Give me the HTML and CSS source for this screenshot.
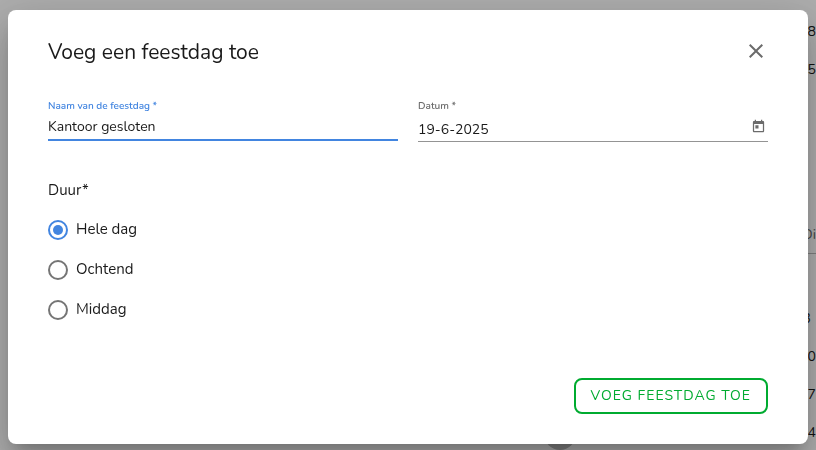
FILE: index.html
```
<!DOCTYPE html>
<html lang="nl">
<head>
    <meta charset="UTF-8">
    <meta name="viewport" content="width=device-width, initial-scale=1.0">
    <title>Voeg een feestdag toe</title>
    <link rel="stylesheet" href="styles.css">
</head>
<body>
    <div class="calendar">
        <ul class="days">
            <li>8</li>
            <li>5</li>
        </ul>
        <div class="month">
            <div class="weekday">Di</div>
            <ul class="days">
                <li class="first">3</li>
                <li>10</li>
                <li>17</li>
                <li>24</li>
            </ul>
        </div>
        <span class="today"></span>
    </div>

    <div class="backdrop">
        <form class="dialog" role="dialog" aria-labelledby="dialog-title">
            <div class="dialog-header">
                <h1 id="dialog-title">Voeg een feestdag toe</h1>
                <button type="button" class="close" aria-label="Sluiten">
                    <svg width="24" height="24" viewBox="0 0 24 24" fill="#6b6b6b"><path d="M19 6.41L17.59 5 12 10.59 6.41 5 5 6.41 10.59 12 5 17.59 6.41 19 12 13.41 17.59 19 19 17.59 13.41 12z"/></svg>
                </button>
            </div>

            <div class="fields">
                <div class="field active">
                    <label for="naam">Naam van de feestdag *</label>
                    <input type="text" id="naam" value="Kantoor gesloten">
                </div>
                <div class="field date">
                    <label for="datum">Datum *</label>
                    <div class="date-row">
                        <input type="text" id="datum" value="19-6-2025">
                        <button type="button" class="picker" aria-label="Kies een datum">
                            <svg width="15" height="15" viewBox="0 0 24 24" fill="#6b6b6b"><path d="M19 3h-1V1h-2v2H8V1H6v2H5c-1.11 0-1.99.9-1.99 2L3 19c0 1.1.89 2 2 2h14c1.1 0 2-.9 2-2V5c0-1.1-.9-2-2-2zm0 16H5V8h14v11zM7 10h5v5H7z"/></svg>
                        </button>
                    </div>
                </div>
            </div>

            <fieldset class="duration">
                <legend>Duur*</legend>
                <label><input type="radio" name="duur" checked><span>Hele dag</span></label>
                <label><input type="radio" name="duur"><span>Ochtend</span></label>
                <label><input type="radio" name="duur"><span>Middag</span></label>
            </fieldset>

            <div class="actions">
                <button type="submit" class="submit">VOEG FEESTDAG TOE</button>
            </div>
        </form>
    </div>
</body>
</html>
```

FILE: styles.css
```
*{
    box-sizing: border-box;
}

body{
    margin: 0;
    min-height: 100vh;
    overflow: hidden;
    background: #fff;
    color: #1a1a1a;
    font-family: Nunito, Lato, sans-serif;
    font-size: 14px;
    line-height: 20px;
}

button, input{
    font: inherit;
    color: inherit;
}

/* calendar behind the dialog */
.calendar{
    height: 100vh;
    padding-top: 13px;
    overflow: hidden;
}

.days{
    list-style: none;
    margin: 0;
    padding: 0;
    text-align: right;
}

.days li{
    line-height: 38px;
}

.days .first{
    padding-right: 5px;
}

.month{
    margin: 125px 0 0 50%;
}

.weekday{
    height: 40px;
    margin-bottom: 46px;
    padding-top: 11px;
    border-bottom: 1px solid #bbb;
    color: #666;
    text-align: right;
}

.today{
    position: absolute;
    left: 544px;
    top: 418px;
    width: 32px;
    height: 32px;
    border-radius: 50%;
    background: #bbb;
}

.backdrop{
    position: fixed;
    inset: 0;
    padding: 10px 8px;
    background: rgba(0, 0, 0, 0.32);
}

.dialog{
    padding: 24px 40px 30px;
    border-radius: 8px;
    background: #fff;
    box-shadow: 0 11px 15px -7px rgba(0, 0, 0, 0.2), 0 24px 38px 3px rgba(0, 0, 0, 0.14), 0 9px 46px 8px rgba(0, 0, 0, 0.12);
}

.dialog-header{
    display: flex;
    align-items: center;
    justify-content: space-between;
    height: 36px;
}

h1{
    margin: 0;
    font-size: 21px;
    font-weight: 400;
    line-height: 36px;
}

.close, .picker{
    display: flex;
    padding: 0;
    border: none;
    background: none;
    cursor: pointer;
}

.close{
    margin-bottom: 2px;
}

.fields{
    display: grid;
    grid-template-columns: 1fr 1fr;
    gap: 20px;
    margin-top: 28px;
}

.field label{
    display: block;
    color: #6b6b6b;
    font-size: 10px;
    font-weight: 600;
    line-height: 16px;
}

.field input{
    display: block;
    width: 100%;
    min-width: 0;
    height: 27px;
    padding: 0;
    border: none;
    outline: none;
    background: none;
}

.field.active label{
    color: #4285e0;
}

.field.active input{
    border-bottom: 2px solid #4285e0;
}

.date-row{
    display: flex;
    align-items: center;
    height: 28px;
    border-bottom: 1px solid #949494;
}

.date-row input{
    padding: 4px 0 0;
}

.picker{
    margin: 0 2px 2px 0;
}

.duration{
    margin: 38px 0 0;
    padding: 0;
    border: none;
    font-size: 15px;
}

.duration legend{
    margin-bottom: 20px;
    padding: 0;
}

.duration label{
    display: flex;
    align-items: center;
    gap: 8px;
    height: 20px;
    margin-bottom: 20px;
}

.duration span{
    padding-bottom: 3px;
}

.duration input{
    appearance: none;
    width: 20px;
    height: 20px;
    margin: 0;
    border: 2px solid #757575;
    border-radius: 50%;
}

.duration input:checked{
    padding: 3px;
    border-color: #4285e0;
    background: #4285e0 content-box;
}

.actions{
    display: flex;
    justify-content: flex-end;
    margin-top: 38px;
}

.submit{
    height: 36px;
    padding: 0 15px;
    border: 2px solid #00ab30;
    border-radius: 8px;
    background: #fff;
    color: #00ab30;
    letter-spacing: 1px;
    cursor: pointer;
}
```
